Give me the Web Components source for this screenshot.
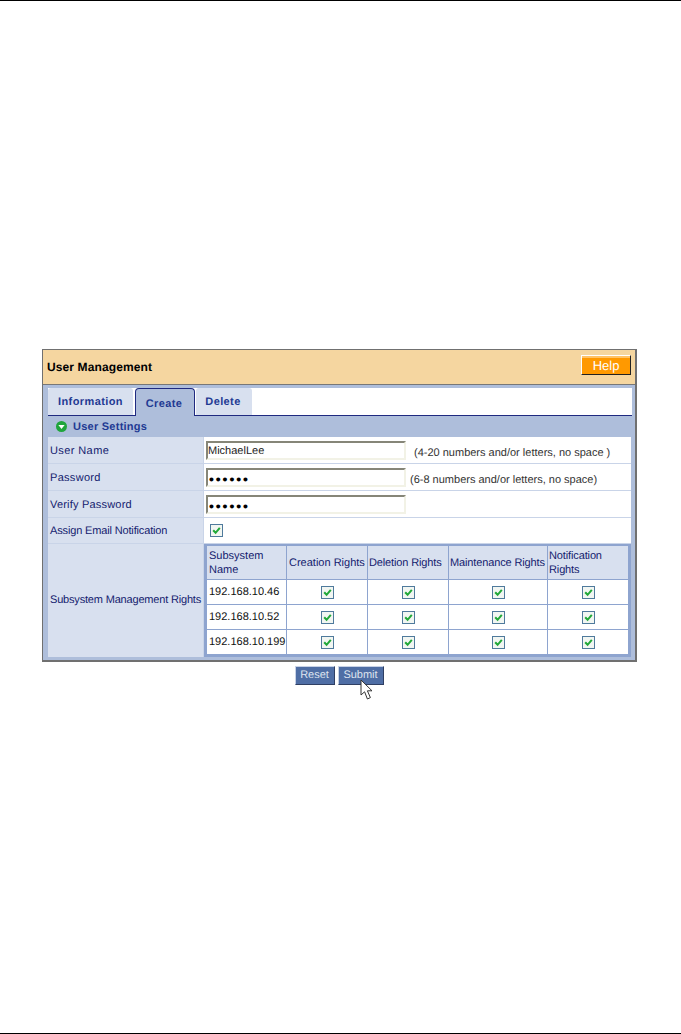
<!DOCTYPE html>
<html>
<head>
<meta charset="utf-8">
<title>User Management</title>
<style>
  html, body { margin: 0; background: #fff; }
  body { font-family: "Liberation Sans", Arial, sans-serif; font-size: 11px; text-rendering: geometricPrecision; }
  .hint { color: #333; padding-top: 5px; }
</style>
</head>
<body>
<manual-page>
  <user-panel>
    <tab-bar slot="tabs"></tab-bar>
    <settings-row label="User Name" style="--label-spacing:.4px">
      <text-box value="MichaelLee"></text-box>
      <span class="hint" style="margin-left:8px">(4-20 numbers and/or letters, no space )</span>
    </settings-row>
    <settings-row label="Password" style="--label-spacing:.3px">
      <text-box value="••••••" masked></text-box>
      <span class="hint" style="margin-left:4px">(6-8 numbers and/or letters, no space)</span>
    </settings-row>
    <settings-row label="Verify Password" style="--label-spacing:.2px">
      <text-box value="••••••" masked></text-box>
    </settings-row>
    <settings-row label="Assign Email Notification" short style="--label-spacing:-.15px">
      <check-mark style="margin-left:4px"></check-mark>
    </settings-row>
    <settings-row label="Subsystem Management Rights" flush style="--label-spacing:-.18px">
      <rights-table></rights-table>
    </settings-row>
  </user-panel>
  <form-buttons></form-buttons>
</manual-page>

<script>
class ManualPage extends HTMLElement {
  constructor() {
    super();
    const shadow = this.attachShadow({ mode: "open" });
    shadow.innerHTML = `
      <style>
        :host { display: flex; flex-direction: column; height: 1034px; box-sizing: border-box;
                border-top: 1px solid #000; border-bottom: 1px solid #000; }
        .content { padding: 348px 44px 0 42px; filter: blur(.3px); }
      </style>
      <div class="content"><slot></slot></div>
    `;
  }
}

class UserPanel extends HTMLElement {
  constructor() {
    super();
    const shadow = this.attachShadow({ mode: "open" });
    shadow.innerHTML = `
      <style>
        :host { display: block; border: 1px solid #707070; border-right-width: 2px; border-bottom-width: 2px;
                background: #aebedb; color: #14206e; }
        header { display: flex; align-items: flex-start; justify-content: space-between; height: 34px;
                 padding: 0 4px; background: #f5d6a0; border-bottom: 1px solid #777; }
        h1 { margin: 10px 0 0; font-size: 12px; line-height: 15px; font-weight: bold; color: #000; letter-spacing: .12px; }
        .help { width: 50px; height: 20px; margin-top: 5px; box-sizing: border-box; background: #ff9900;
                border: 1px solid; border-color: #fff #222 #222 #fff; box-shadow: inset 0 2px 0 #ffc266;
                color: #fff; font-size: 13px; text-align: center; line-height: 19px; }
        .body { padding: 3px 3px 3px 5px; }
        .bar { display: flex; align-items: center; gap: 6px; height: 21px; padding-left: 8px;
               font-size: 11px; font-weight: bold; letter-spacing: .25px; color: #1f3a93; }
        .bar svg { width: 11px; height: 11px; }
        .rows { display: flex; flex-direction: column; gap: 1px; margin-right: 1px; background: #c9d4e8; }
      </style>
      <header><h1>User Management</h1><div class="help">Help</div></header>
      <div class="body">
        <slot name="tabs"></slot>
        <div class="bar">
          <svg viewBox="0 0 11 11"><circle cx="5.5" cy="5.5" r="5.5" fill="#1fa53c"/><path d="M2.4 4h6.2L5.5 8z" fill="#fff"/></svg>
          User Settings
        </div>
        <div class="rows"><slot></slot></div>
      </div>
    `;
  }
}

class TabBar extends HTMLElement {
  constructor() {
    super();
    const shadow = this.attachShadow({ mode: "open" });
    shadow.innerHTML = `
      <style>
        :host { display: flex; align-items: flex-end; height: 28px; background: #fff; border-bottom: 1px solid #1f2a80;
                box-sizing: border-box; }
        div { display: flex; align-items: center; justify-content: center; box-sizing: border-box;
              font-size: 11px; font-weight: bold; color: #1f3a93; letter-spacing: .4px; background: #d8e0ef; }
        .first { width: 85px; height: 27px; border-radius: 3px 3px 0 0; padding-top: 1px; margin-right: 2px; }
        .active { width: 60px; height: 28px; margin-bottom: -1px; background: #aebedb; border: 1px solid #1f2a80;
                  border-bottom: 0; border-radius: 4px 4px 0 0; margin-right: 1px; padding: 2px 2px 0 0; }
        .last { width: 56px; height: 27px; border-radius: 3px 3px 0 0; padding: 1px 2px 0 0; }
      </style>
      <div class="first">Information</div>
      <div class="active">Create</div>
      <div class="last">Delete</div>
    `;
  }
}

class SettingsRow extends HTMLElement {
  constructor() {
    super();
    const shadow = this.attachShadow({ mode: "open" });
    shadow.innerHTML = `
      <style>
        :host { display: grid; grid-template-columns: 155px 1fr; column-gap: 1px; min-height: 26px; }
        :host([short]) { min-height: 25px; }
        .label { display: flex; align-items: center; padding: 1px 0 0 2px; background: #d8e0ef; color: #14206e;
                 white-space: nowrap; letter-spacing: var(--label-spacing, 0); }
        :host([short]) .label { padding-top: 0; }
        :host([flush]) .label { padding: 0 0 1px 2px; }
        .value { display: flex; align-items: center; padding-left: 2px; background: #fff; color: #222; }
        :host([flush]) .value { padding: 0; background: #aebedb; }
      </style>
      <div class="label"></div>
      <div class="value"><slot></slot></div>
    `;
    shadow.querySelector(".label").textContent = this.getAttribute("label");
  }
}

class TextBox extends HTMLElement {
  constructor() {
    super();
    const shadow = this.attachShadow({ mode: "open" });
    shadow.innerHTML = `
      <style>
        :host { display: block; width: 200px; height: 19px; box-sizing: border-box; background: #fff;
                border: 2px solid; border-color: #868678 #f2f2e6 #f2f2e6 #868678;
                color: #222; line-height: 17px; font-size: 11px; white-space: nowrap; overflow: hidden; }
        :host([masked]) { color: #000; font-size: 14px; line-height: 18px; font-weight: bold; letter-spacing: 1.9px;
                          padding-left: 1px; }
      </style>
      <span></span>
    `;
    shadow.querySelector("span").textContent = this.getAttribute("value");
  }
}

class CheckMark extends HTMLElement {
  constructor() {
    super();
    const shadow = this.attachShadow({ mode: "open" });
    shadow.innerHTML = `
      <style>
        :host { display: inline-block; width: 13px; height: 13px; line-height: 0; }
      </style>
      <svg width="13" height="13" viewBox="0 0 13 13">
        <rect x=".5" y=".5" width="12" height="12" fill="#f2f6f2" stroke="#4f7a9c"/>
        <path d="M3.2 6.2 5.6 8.8 9.8 3.8" fill="none" stroke="#21a838" stroke-width="2"/>
      </svg>
    `;
  }
}

class RightsTable extends HTMLElement {
  constructor() {
    super();
    const shadow = this.attachShadow({ mode: "open" });
    const hosts = ["192.168.10.46", "192.168.10.52", "192.168.10.199"];
    let cells = "";
    hosts.forEach((host) => {
      cells += `<div class="host">${host}</div>`;
      for (let i = 0; i < 4; i++) {
        cells += `<div class="tick"><check-mark></check-mark></div>`;
      }
    });
    shadow.innerHTML = `
      <style>
        :host { display: grid; flex: 1; grid-template-columns: 79px 80px 80px 98px 80px;
                grid-template-rows: 33px 24px 24px 24px; gap: 1px; background: #8ea4cf;
                border: 3px solid #8ea4cf; border-top-width: 2px; }
        div { display: flex; align-items: center; padding-left: 2px; line-height: 14px; white-space: nowrap; }
        .head { background: #d8e0ef; color: #14206e; padding-top: 1px; }
        .tight { padding-left: 1px; letter-spacing: -.13px; }
        .host { background: #fff; color: #111; }
        .tick { background: #fff; justify-content: center; padding: 0; }
      </style>
      <div class="head">Subsystem<br>Name</div>
      <div class="head">Creation Rights</div>
      <div class="head tight">Deletion Rights</div>
      <div class="head tight">Maintenance Rights</div>
      <div class="head tight">Notification<br>Rights</div>
      ${cells}
    `;
  }
}

class FormButtons extends HTMLElement {
  constructor() {
    super();
    const shadow = this.attachShadow({ mode: "open" });
    shadow.innerHTML = `
      <style>
        :host { display: flex; justify-content: center; gap: 3px; position: relative; padding: 4px 1px 0 0; }
        div { height: 19px; box-sizing: border-box; background: #4f6ea5; color: #dde3ef; text-align: center;
              font-size: 11px; line-height: 17px; border: 1px solid; border-color: #c8d2e6 #2f3f63 #2f3f63 #c8d2e6; }
        .reset { width: 40px; }
        .submit { width: 46px; }
        svg { position: absolute; left: 318px; top: 17px; }
      </style>
      <div class="reset">Reset</div>
      <div class="submit">Submit</div>
      <svg width="14" height="22" viewBox="0 0 14 22">
        <path d="M1 1V16L4.6 12.8 7.4 20 10.4 18.6 7.4 11.8H12Z" fill="#fff" stroke="#333" stroke-width="1"/>
      </svg>
    `;
  }
}

customElements.define("manual-page", ManualPage);
customElements.define("user-panel", UserPanel);
customElements.define("tab-bar", TabBar);
customElements.define("settings-row", SettingsRow);
customElements.define("text-box", TextBox);
customElements.define("check-mark", CheckMark);
customElements.define("rights-table", RightsTable);
customElements.define("form-buttons", FormButtons);
</script>
</body>
</html>
